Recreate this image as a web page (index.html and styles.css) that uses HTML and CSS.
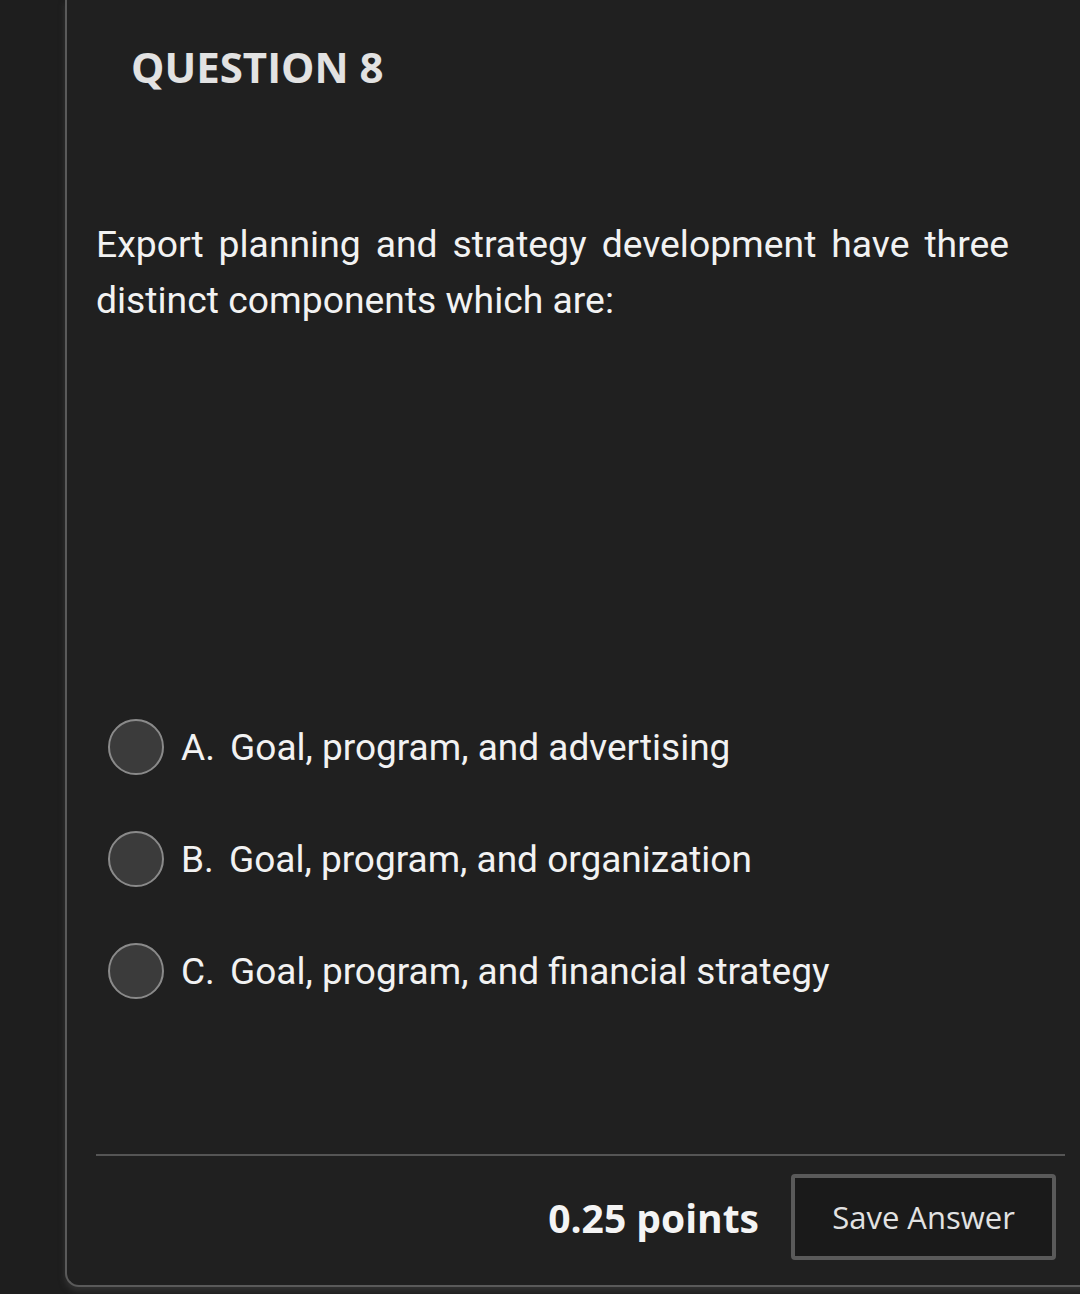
FILE: index.html
```html
<!DOCTYPE html>
<html>
<head>
<meta charset="utf-8">
<link rel="stylesheet" href="styles.css">
</head>
<body>
<div class="page">
  <div class="card">
    <h1 class="title">QUESTION 8</h1>
    <p class="question">Export planning and strategy development have three distinct components which are:</p>
    <ul class="options">
      <li class="option"><span class="radio"></span><span class="opt-text"><span class="letter">A.</span> Goal, program, and advertising</span></li>
      <li class="option"><span class="radio"></span><span class="opt-text"><span class="letter">B.</span> Goal, program, and organization</span></li>
      <li class="option"><span class="radio"></span><span class="opt-text"><span class="letter">C.</span> Goal, program, and financial strategy</span></li>
    </ul>
    <div class="footer">
      <span class="points">0.25 points</span>
      <button class="save">Save Answer</button>
    </div>
  </div>
</div>
</body>
</html>
```
FILE: styles.css
```css
html, body {
  margin: 0;
  padding: 0;
  background: #1f1f1f;
  overflow: hidden;
}
.page {
  width: 1080px;
  height: 1294px;
  background: #1e1e1e;
  overflow: hidden;
}
.card {
  margin-left: 65px;
  width: 1100px;
  height: 1287px;
  padding-left: 29px;
  box-sizing: border-box;
  border-left: 2px solid #5a5a5a;
  border-bottom: 2px solid #5a5a5a;
  border-bottom-left-radius: 14px;
  background: #202020;
  box-shadow: 0 4px 6px rgba(70,70,70,0.5);
  display: flex;
  flex-direction: column;
}
.title {
  margin: 39px 0 0 35px;
  font-family: "Open Sans", sans-serif;
  font-weight: 700;
  font-size: 42px;
  line-height: 56px;
  color: #e2e2e2;
}
.question {
  margin: 121px 0 0 0;
  width: 913px;
  font-family: Roboto, sans-serif;
  font-size: 37.3px;
  line-height: 56px;
  color: #f2f2f2;
  text-align: justify;
}
.options {
  list-style: none;
  margin: 391px 0 0 12px;
  padding: 0;
  display: flex;
  flex-direction: column;
  gap: 56px;
}
.option {
  display: flex;
  align-items: center;
  gap: 17px;
  height: 56px;
}
.radio {
  width: 56px;
  height: 56px;
  box-sizing: border-box;
  border-radius: 50%;
  border: 2px solid #8a8a8a;
  background: #3b3b3b;
  flex: none;
}
.opt-text {
  font-family: Roboto, sans-serif;
  font-size: 37px;
  color: #f2f2f2;
  line-height: 56px;
  padding-top: 2px;
}
.letter {
  margin-right: 6px;
}
.footer {
  margin-top: 155px;
  width: 969px;
  border-top: 2px solid #555;
  display: flex;
  justify-content: flex-end;
  align-items: center;
  gap: 32px;
  padding: 18px 9px 0 0;
  box-sizing: border-box;
}
.points {
  font-family: "Open Sans", sans-serif;
  font-weight: 700;
  font-size: 39px;
  color: #f4f4f4;
}
.save {
  width: 265px;
  height: 86px;
  box-sizing: border-box;
  border: 4px solid #5a5a5a;
  border-radius: 4px;
  background: #1a1a1a;
  font-family: "Open Sans", sans-serif;
  font-size: 31px;
  color: #e2e2e2;
  padding: 0;
}
```
